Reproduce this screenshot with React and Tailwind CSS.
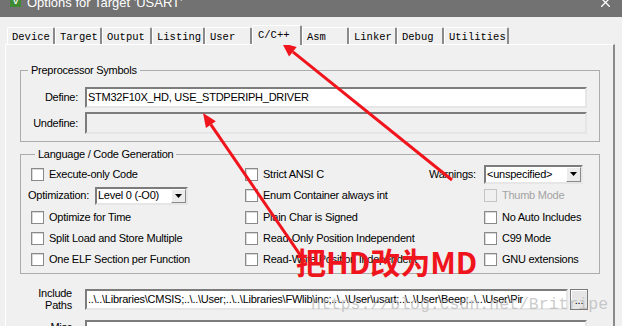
import React from "react"

const SUNKEN = "border-2 border-t-[#7c7c7c] border-l-[#7c7c7c] border-b-[#e6e6e6] border-r-[#e6e6e6]"

const tabs = [
	{ label: "Device", w: "w-[48px]" },
	{ label: "Target", w: "w-[47px]" },
	{ label: "Output", w: "w-[50px]" },
	{ label: "Listing", w: "w-[53px]" },
	{ label: "User", w: "w-[47px]" },
	{ label: "C/C++", w: "w-[50px]", active: true },
	{ label: "Asm", w: "w-[47px]" },
	{ label: "Linker", w: "w-[48px]" },
	{ label: "Debug", w: "w-[47px]" },
	{ label: "Utilities", w: "w-[65px]" },
]

const Check = ({ label, disabled }) => (
	<div className="flex items-center">
		<span className={disabled
			? "w-[13px] h-[13px] shrink-0 bg-[#f0f0f0] border border-[#c4c4c4]"
			: "w-[13px] h-[13px] shrink-0 bg-white border border-[#8a8a8a] shadow-[inset_1px_1px_0_#d8d8d8]"} />
		<span className={disabled ? "ml-[5px] text-[#a3a3a3] whitespace-nowrap" : "ml-[5px] whitespace-nowrap"}>{label}</span>
	</div>
)

const Combo = ({ value, w, h }) => (
	<div className={`${SUNKEN} bg-white flex items-stretch ${w} ${h}`}>
		<div className="flex-1 pl-[1px] leading-none flex items-center whitespace-nowrap overflow-hidden">{value}</div>
		<div className="w-[15px] bg-[#ececec] border border-t-white border-l-white border-b-[#8a8a8a] border-r-[#8a8a8a] flex items-center justify-center">
			<svg width="7" height="4" viewBox="0 0 7 4"><path d="M0 0h7L3.5 4z" fill="#000" /></svg>
		</div>
	</div>
)

const Legend = ({ children }) => (
	<legend className="ml-[7px] px-[3px] leading-[13px]">{children}</legend>
)

export default function App() {
	return (
		<div className='w-[622px] h-[326px] bg-[#f0f0f0] overflow-hidden relative font-["Liberation_Sans",Arial,sans-serif] text-[11px] tracking-[-0.25px] text-black'>
			{/* title bar */}
			<div className="h-[17px] bg-[#727272] overflow-hidden flex">
				<div className="ml-[10px] mt-[-3px] w-[11px] h-[10px] bg-[#3f8a35] text-white text-[8px] font-bold leading-[10px] text-center">V</div>
				<div className='ml-[6px] mt-[-4px] leading-[13px] text-[13px] tracking-normal text-white font-["Liberation_Sans",Arial,sans-serif]'>Options for Target 'USART'</div>
				<div className="ml-auto mr-[12px] mt-[-2px]">
					<svg width="9" height="9" viewBox="0 0 9 9"><path d="M0 0L9 9M9 0L0 9" stroke="#fff" strokeWidth="1.3" /></svg>
				</div>
			</div>

			{/* tabs */}
			<div className="pl-[7px] mt-[8px] h-[19px] flex items-end relative z-10">
				{tabs.map(t => (
					<div key={t.label}
						className={t.active
							? `${t.w} h-[20px] -mb-px bg-[#f0f0f0] border-l border-t border-white border-r-2 border-r-[#8a8a8a] rounded-t-[2px] pl-[5px] pt-[3px] font-["Liberation_Mono",monospace] text-[10.5px] tracking-normal leading-[12px]`
							: `${t.w} h-[17px] border-l border-t border-white border-r-2 border-r-[#8a8a8a] rounded-t-[2px] pl-[4px] pt-[3px] font-["Liberation_Mono",monospace] text-[10.5px] tracking-normal leading-[12px]`}>
						{t.label}
					</div>
				))}
			</div>

			{/* body */}
			<div className="ml-[5px] w-[610px] h-[290px] border-l border-t border-white border-r-2 border-r-[#8a8a8a] pt-[19px] pl-[14px]">
				<fieldset className="w-[580px] border border-[#acacac] pt-[10px] pb-[7px]">
					<Legend>Preprocessor Symbols</Legend>
					<div className="flex items-center">
						<div className="w-[57px] text-right">Define:</div>
						<div className={`${SUNKEN} ml-[7px] w-[502px] h-[21px] bg-white pl-[1px] flex items-center whitespace-nowrap`}>STM32F10X_HD, USE_STDPERIPH_DRIVER</div>
					</div>
					<div className="flex items-center mt-[4px]">
						<div className="w-[57px] text-right">Undefine:</div>
						<div className={`${SUNKEN} ml-[7px] w-[502px] h-[22px] bg-[#f0f0f0]`} />
					</div>
				</fieldset>

				<fieldset className="w-[580px] mt-[6px] border border-[#acacac] pt-[3px] pb-[4px] pl-[7px]">
					<Legend>Language / Code Generation</Legend>
					<div className="grid grid-cols-[217px_184px_1fr] grid-rows-[20px_23px_21px_21px_20px] items-center">
						<div className="ml-[3px]"><Check label="Execute-only Code" /></div>
						<Check label="Strict ANSI C" />
						<div className="flex items-center">
							<div className="w-[55px]">Warnings:</div>
							<Combo value="<unspecified>" w="w-[99px]" h="h-[19px]" />
						</div>

						<div className="flex items-center">
							<div className="w-[67px]">Optimization:</div>
							<Combo value="Level 0 (-O0)" w="w-[93px]" h="h-[18px]" />
						</div>
						<Check label="Enum Container always int" />
						<div className="ml-[55px]"><Check label="Thumb Mode" disabled /></div>

						<div className="ml-[3px]"><Check label="Optimize for Time" /></div>
						<Check label="Plain Char is Signed" />
						<div className="ml-[55px]"><Check label="No Auto Includes" /></div>

						<div className="ml-[3px]"><Check label="Split Load and Store Multiple" /></div>
						<Check label="Read-Only Position Independent" />
						<div className="ml-[55px]"><Check label="C99 Mode" /></div>

						<div className="ml-[3px]"><Check label="One ELF Section per Function" /></div>
						<Check label="Read-Write Position Independent" />
						<div className="ml-[55px]"><Check label="GNU extensions" /></div>
					</div>
				</fieldset>

				<div className="flex items-center mt-[13px]">
					<div className="w-[52px] text-right leading-[12px]">Include<br />Paths</div>
					<div className={`${SUNKEN} ml-[13px] w-[483px] h-[21px] bg-white pl-[1px] flex items-center whitespace-nowrap overflow-hidden`}>..\..\Libraries\CMSIS;..\..\User;..\..\Libraries\FWlib\inc;..\..\User\usart;..\..\User\Beep;..\..\User\Pir</div>
					<div className="ml-[2px] w-[18px] h-[21px] bg-[#e6e6e6] border border-[#7a7a7a] shadow-[inset_1px_1px_0_#fff] flex items-end justify-center pb-[3px] leading-none">...</div>
				</div>
				<div className="flex items-start mt-[9px]">
					<div className="w-[52px] text-right leading-[12px] pt-[1px]">Misc</div>
					<div className={`${SUNKEN} ml-[13px] w-[502px] h-[22px] bg-white`} />
				</div>
			</div>

			{/* watermark */}
			<div className='absolute left-[311px] top-[297px] font-["Liberation_Mono",monospace] text-[16.5px] tracking-normal leading-none text-[#b4b4b4]/70 pointer-events-none'>https://blog.csdn.net/Britripe</div>

			{/* annotation */}
			<svg className="absolute inset-0 pointer-events-none" width="622" height="326" viewBox="0 0 622 326">
				<line x1="452" y1="180" x2="292.9" y2="51.8" stroke="#f0141c" strokeWidth="3" />
				<polygon points="282,43 296.7,47.1 289.1,56.5" fill="#f0141c" />
				<line x1="305" y1="262" x2="210.9" y2="124.6" stroke="#f0141c" strokeWidth="3" />
				<polygon points="203,113 215.85,121.2 205.95,128" fill="#f0141c" />
			</svg>
			<div className='absolute left-[296px] top-[246px] font-["Noto_Sans_CJK_SC","Noto_Sans",sans-serif] font-bold text-[30px] leading-[30px] tracking-normal text-[#f0141c] whitespace-nowrap pointer-events-none'>把HD改为MD</div>
		</div>
	)
}
